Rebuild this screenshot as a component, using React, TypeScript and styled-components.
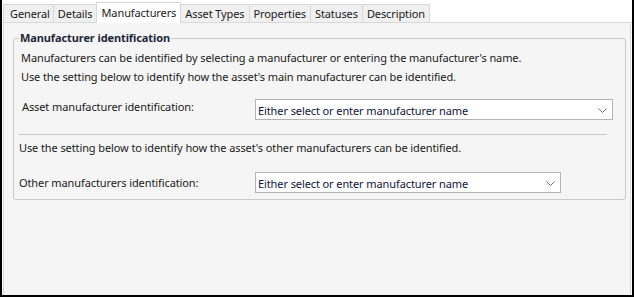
import React from "react";
import styled, { createGlobalStyle } from "styled-components";

const GlobalStyle = createGlobalStyle`
    body {
        margin: 0;
        background: #ffffff;
        font-family: "Noto Sans", "Open Sans", sans-serif;
        font-size: 11px;
        letter-spacing: -0.1px;
        color: #1a1a1a;
    }
`;

const tabs = [
    "General",
    "Details",
    "Manufacturers",
    "Asset Types",
    "Properties",
    "Statuses",
    "Description"
];

const Chevron: React.FC = () => (
    <svg width="9" height="5" viewBox="0 0 9 5">
        <path d="M0.5 0.5 L4.5 4.5 L8.5 0.5" fill="none" stroke="#707070" strokeWidth="1" />
    </svg>
);

interface ComboProps {
    value: string;
    width: number;
}

const Combo: React.FC<ComboProps> = ({ value, width }) => (
    <ComboBox style={{ width }}>
        <ComboText>{value}</ComboText>
        <Chevron />
    </ComboBox>
);

const App: React.FC = () => {
    const active = "Manufacturers";

    return (
        <>
            <GlobalStyle />
            <Frame>
                <TabStrip>
                    {tabs.map((t) => (
                        <Tab key={t} active={t === active}>
                            {t}
                        </Tab>
                    ))}
                </TabStrip>
                <Panel>
                    <GroupBox>
                        <Legend>Manufacturer identification</Legend>
                        <Para indent={2}>
                            Manufacturers can be identified by selecting a manufacturer or entering the manufacturer's name.
                        </Para>
                        <Para indent={2}>
                            Use the setting below to identify how the asset's main manufacturer can be identified.
                        </Para>
                        <Row top={13}>
                            <Label indent={3}>Asset manufacturer identification:</Label>
                            <Combo value="Either select or enter manufacturer name" width={358} />
                        </Row>
                        <Separator />
                        <Para indent={0} top={3}>
                            Use the setting below to identify how the asset's other manufacturers can be identified.
                        </Para>
                        <Row top={15} center>
                            <Label indent={0}>Other manufacturers identification:</Label>
                            <Combo value="Either select or enter manufacturer name" width={306} />
                        </Row>
                    </GroupBox>
                </Panel>
            </Frame>
        </>
    );
};

const Frame = styled.div`
    box-sizing: border-box;
    width: 634px;
    height: 297px;
    display: flex;
    flex-direction: column;
    padding-left: 1px;
    border-left: 2px solid #000;
    border-right: 2px solid #000;
    border-bottom: 2px solid #000;
    background: #fff;
`;

const TabStrip = styled.div`
    display: flex;
    align-items: flex-end;
    height: 22px;
    position: relative;
    z-index: 1;
`;

const Tab = styled("div")<{ active: boolean }>`
    box-sizing: border-box;
    height: ${(p) => (p.active ? "21px" : "18px")};
    margin-bottom: ${(p) => (p.active ? "-1px" : "0")};
    margin-left: -1px;
    padding: 0 4px;
    display: flex;
    align-items: center;
    justify-content: center;
    padding-bottom: ${(p) => (p.active ? "2px" : "0")};
    border: 1px solid #d9d9d9;
    border-bottom: none;
    background: ${(p) => (p.active ? "#ffffff" : "#f0f0f0")};
    color: #1a1a1a;
    white-space: nowrap;
    position: relative;
    z-index: ${(p) => (p.active ? 2 : 1)};

    &:first-child {
        margin-left: 0;
        padding-left: 6px;
        padding-right: 3px;
    }
`;

const Panel = styled.div`
    flex: 1;
    box-sizing: border-box;
    margin-right: 1px;
    border: 1px solid #d9d9d9;
    border-bottom: none;
    background: #f5f5f5;
    padding: 0 4px 0 9px;
`;

const GroupBox = styled.fieldset`
    margin: 7px 0 0 0;
    padding: 0 9px 6px 5px;
    border: 1px solid #c9c9c9;
    border-radius: 3px;
    min-width: 0;
`;

const Legend = styled.legend`
    padding: 0 1px;
    font-weight: 700;
    line-height: 16px;
    color: #1e2738;
`;

const Para = styled("div")<{ indent: number; top?: number }>`
    margin-top: ${(p) => (p.top !== undefined ? p.top : 2)}px;
    padding-left: ${(p) => p.indent}px;
    line-height: 19px;
    white-space: nowrap;

    & + & {
        margin-top: 0;
    }
`;

const Row = styled("div")<{ top: number; center?: boolean }>`
    display: grid;
    grid-template-columns: 236px auto;
    align-items: ${(p) => (p.center ? "center" : "start")};
    margin-top: ${(p) => p.top}px;
`;

const Label = styled("div")<{ indent: number }>`
    padding-left: ${(p) => p.indent}px;
    line-height: 16px;
    white-space: nowrap;
`;

const ComboBox = styled.div`
    box-sizing: border-box;
    height: 21px;
    display: flex;
    align-items: center;
    justify-content: space-between;
    padding: 1px 5px 0 2px;
    border: 1px solid #b3b3b3;
    background: #ffffff;
`;

const ComboText = styled.span`
    color: #10133a;
    white-space: nowrap;
`;

const Separator = styled.div`
    height: 1px;
    margin: 14px 9px 0 0;
    background: #c9c9c9;
`;

export default App;
